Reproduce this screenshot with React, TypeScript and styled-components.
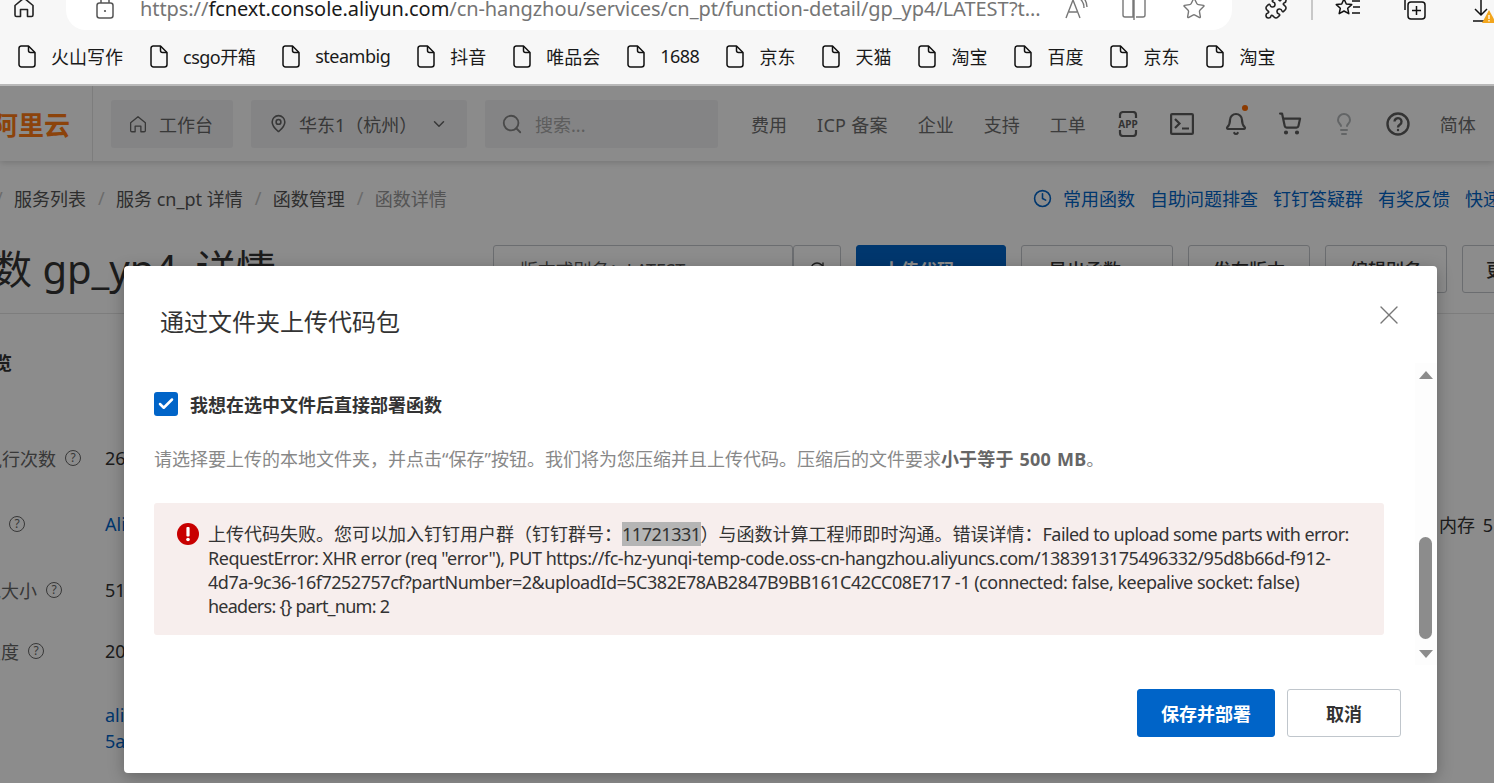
import React from "react";
import styled, { createGlobalStyle } from "styled-components";
import { Clock, MapPin, Search, ChevronDown, ShoppingCart, Lightbulb, Bell, Puzzle, Star, X, Check, RotateCw } from "lucide-react";

const Global = createGlobalStyle`
  html, body { margin: 0; padding: 0; background: #fff; }
  * { box-sizing: border-box; }
  body { font-family: "Noto Sans", "Noto Sans CJK SC", sans-serif; }
`;

const Screen = styled.div`
  position: relative;
  width: 1494px;
  height: 783px;
  overflow: hidden;
  display: flex;
  flex-direction: column;
  background: #fff;
`;

/* browser chrome */
const Chrome = styled.header`
  flex: none;
  height: 86px;
  background: #f7f7f7;
  border-bottom: 2px solid #b9b9b9;
  display: flex;
  flex-direction: column;
`;
const TopRow = styled.div`
  height: 30px;
  display: flex;
  align-items: flex-start;
  overflow: hidden;
`;
const ToolSlot = styled.div<{ $w: number; $ml?: number }>`
  flex: none;
  width: ${(p) => p.$w}px;
  margin-left: ${(p) => p.$ml ?? 0}px;
  display: flex;
  justify-content: center;
  margin-top: -4px;
  color: #222;
`;
const AddressBar = styled.div`
  flex: none;
  width: 1166px;
  height: 30px;
  margin-left: 31px;
  background: #fff;
  border-radius: 0 0 20px 20px;
  display: flex;
  align-items: flex-start;
`;
const Url = styled.div`
  flex: none;
  width: 900px;
  margin-left: 26px;
  margin-top: -6px;
  font-size: 20px;
  line-height: 30px;
  letter-spacing: -0.07px;
  white-space: nowrap;
  color: #757575;
  b { font-weight: 400; color: #1a1a1a; }
`;
const ToolDivider = styled.div`
  flex: none;
  width: 2px;
  height: 20px;
  margin-left: 23px;
  background: #c8c8c8;
`;
const Bookmarks = styled.nav`
  height: 54px;
  display: flex;
  align-items: center;
  padding: 0 0 2px 18px;
  gap: 27px;
`;
const Bookmark = styled.a<{ $latin?: boolean }>`
  flex: none;
  display: flex;
  align-items: center;
  gap: 15px;
  font-size: 18px;
  color: #1a1a1a;
  white-space: nowrap;
  letter-spacing: ${(p) => (p.$latin ? "-0.5px" : "0")};
`;

/* console page */
const Page = styled.main`
  flex: 1;
  min-height: 0;
  overflow: hidden;
  background: #fff;
  color: #555;
`;
const TopNav = styled.div`
  height: 75px;
  display: flex;
  align-items: center;
  background: #fdfdfd;
  box-shadow: 0 2px 6px rgba(0, 0, 0, 0.15);
`;
const Logo = styled.div`
  flex: none;
  width: 93px;
  height: 75px;
  border-right: 1px solid #e4e4e4;
  display: flex;
  align-items: center;
  font-size: 26px;
  font-weight: 700;
  color: #ff7a14;
  white-space: nowrap;
  span { margin-left: -8px; }
`;
const NavPill = styled.div<{ $w: number; $faint?: boolean; $pad?: number; $gap?: number }>`
  flex: none;
  width: ${(p) => p.$w}px;
  height: 48px;
  margin-left: 18px;
  padding-left: ${(p) => p.$pad ?? 18}px;
  background: #f1f1f3;
  border-radius: 3px;
  display: flex;
  align-items: center;
  gap: ${(p) => p.$gap ?? 10}px;
  font-size: 18px;
  color: ${(p) => (p.$faint ? "#aaa" : "#666")};
  white-space: nowrap;
`;
const NavRight = styled.div`
  flex: none;
  margin-left: 33px;
  display: flex;
  align-items: center;
  gap: 30px;
  font-size: 18px;
  color: #6e6e6e;
  white-space: nowrap;
`;
const WideNavText = styled.span`
  letter-spacing: 0.3px;
`;
const NavIcon = styled.div<{ $faint?: boolean }>`
  position: relative;
  flex: none;
  width: 24px;
  height: 24px;
  display: flex;
  align-items: center;
  justify-content: center;
  color: ${(p) => (p.$faint ? "#b4b8bb" : "#5e5e5e")};
`;
const Dot = styled.i`
  position: absolute;
  top: -7px;
  right: 0;
  width: 6px;
  height: 6px;
  border-radius: 50%;
  background: #ff6a00;
`;
const Crumbs = styled.div`
  height: 76px;
  padding-bottom: 2px;
  display: flex;
  align-items: center;
  font-size: 18px;
  white-space: nowrap;
`;
const CrumbLeft = styled.div`
  flex: 0 0 1037px;
  display: flex;
  align-items: center;
  gap: 12px;
  color: #555;
  margin-left: -4px;
  em { font-style: normal; color: #c4c4c4; width: 6px; }
`;
const CrumbCurrent = styled.span`
  color: #999;
`;
const Links = styled.div`
  flex: none;
  display: flex;
  align-items: center;
  gap: 15px;
  color: #0064c8;
  svg { margin-right: -4px; }
`;
const TitleRow = styled.div`
  height: 77px;
  display: flex;
  align-items: flex-start;
  padding-top: 8px;
  border-bottom: 1px solid #e3e3e3;
  white-space: nowrap;
`;
const PageTitle = styled.h1`
  flex: 0 0 541px;
  margin: 0 0 0 -48px;
  font-size: 40px;
  line-height: 48px;
  font-weight: 400;
  color: #333;
`;
const TitleTail = styled.span`
  margin-left: 8px;
`;
const ActionBtn = styled.div<{ $w: number; $ml?: number; $primary?: boolean }>`
  flex: none;
  width: ${(p) => p.$w}px;
  height: 48px;
  margin-left: ${(p) => p.$ml ?? 15}px;
  border: 1px solid ${(p) => (p.$primary ? "#0064c8" : "#c4c6cc")};
  border-radius: 3px;
  background: ${(p) => (p.$primary ? "#0064c8" : "#fff")};
  color: ${(p) => (p.$primary ? "#fff" : "#333")};
  font-size: 18px;
  font-weight: ${(p) => (p.$primary ? 700 : 500)};
  display: flex;
  align-items: center;
  justify-content: center;
  gap: 8px;
`;
const SelectBtn = styled(ActionBtn)`
  justify-content: space-between;
  padding: 0 14px 0 26px;
  font-weight: 400;
  color: #555;
  letter-spacing: -0.2px;
`;
const TabBand = styled.div`
  height: 81px;
  padding-top: 14px;
  display: flex;
  align-items: center;
  font-size: 18px;
  font-weight: 700;
  color: #333;
  margin-left: -24px;
`;
const Details = styled.div`
  padding-top: 29px;
`;
const Row = styled.div<{ $h: number }>`
  height: ${(p) => p.$h}px;
  display: flex;
  align-items: center;
  font-size: 18px;
  white-space: nowrap;
`;
const LabelCell = styled.div`
  flex: 0 0 105px;
  display: flex;
  align-items: center;
  color: #666;
`;
const LabelText = styled.div<{ $end: number }>`
  width: ${(p) => p.$end}px;
  display: flex;
  justify-content: flex-end;
`;
const Hint = styled.span`
  flex: none;
  width: 16px;
  height: 16px;
  margin-left: 9px;
  border: 1.5px solid #666;
  border-radius: 50%;
  font-size: 12px;
  line-height: 13px;
  text-align: center;
  color: #666;
`;
const Value = styled.div<{ $link?: boolean; $w?: number }>`
  flex: ${(p) => (p.$w ? `0 0 ${p.$w}px` : "none")};
  color: ${(p) => (p.$link ? "#0064c8" : "#333")};
  word-spacing: 3px;
`;
const LinkStack = styled.div`
  margin: 22px 0 0 105px;
  font-size: 18px;
  line-height: 26px;
  color: #0064c8;
`;

/* dialog */
const Overlay = styled.div`
  position: absolute;
  left: 0;
  right: 0;
  top: 86px;
  bottom: 0;
  background: rgba(0, 0, 0, 0.45);
`;
const Dialog = styled.section`
  position: absolute;
  left: 124px;
  top: 266px;
  width: 1313px;
  height: 507px;
  background: #fff;
  border-radius: 4px;
  box-shadow: 0 4px 16px rgba(0, 0, 0, 0.28);
  display: flex;
  flex-direction: column;
`;
const DialogHead = styled.div`
  flex: none;
  height: 97px;
  padding: 40px 40px 0 36px;
  display: flex;
  justify-content: space-between;
  align-items: flex-start;
`;
const DialogTitle = styled.h2`
  margin: 0;
  font-size: 24px;
  line-height: 32px;
  font-weight: 400;
  color: #333;
`;
const CloseBtn = styled.div`
  width: 16px;
  height: 16px;
  margin-top: 1px;
  color: #777;
  display: flex;
  align-items: center;
  justify-content: center;
`;
const DialogMiddle = styled.div`
  flex: none;
  height: 302px;
  display: flex;
`;
const Content = styled.div`
  flex: 1;
  padding: 29px 31px 0 30px;
`;
const CheckRow = styled.label`
  display: flex;
  align-items: center;
  gap: 12px;
  height: 24px;
  font-size: 18px;
  font-weight: 700;
  color: #333;
`;
const CheckBox = styled.span`
  flex: none;
  width: 24px;
  height: 24px;
  border-radius: 3px;
  background: #0064c8;
  color: #fff;
  display: flex;
  align-items: center;
  justify-content: center;
`;
const HintText = styled.p`
  margin: 31px 0 0;
  font-size: 18px;
  line-height: 24px;
  color: #888;
  white-space: nowrap;
  b { color: #666; font-weight: 700; letter-spacing: 0.2px; word-spacing: 1px; }
`;
const ErrorBox = styled.div`
  margin-top: 32px;
  height: 132px;
  padding: 19px 0 0 23px;
  background: #f7eeed;
  border-radius: 3px;
  display: flex;
  gap: 9px;
`;
const ErrorDot = styled.span`
  flex: none;
  width: 22px;
  height: 22px;
  margin-top: 1px;
  color: #c80000;
  display: flex;
`;
const ErrorText = styled.div`
  font-size: 18px;
  line-height: 24px;
  color: #333;
  white-space: nowrap;
  mark { background: #b5b5b5; color: #333; letter-spacing: -0.47px; }
`;
const Latin = styled.span<{ $ls: number }>`
  letter-spacing: ${(p) => p.$ls}px;
`;
const Track = styled.div`
  flex: none;
  width: 22px;
  background: #fdfdfd;
  display: flex;
  flex-direction: column;
  align-items: center;
  padding-right: 1px;
`;
const ArrowUp = styled.i`
  margin-top: 8px;
  border: 7px solid transparent;
  border-top: 0;
  border-bottom: 8px solid #8c8c8c;
`;
const Thumb = styled.i`
  margin-top: 158px;
  width: 13px;
  height: 102px;
  border-radius: 7px;
  background: #8c8c8c;
`;
const ArrowDown = styled.i`
  margin-top: 11px;
  border: 7px solid transparent;
  border-bottom: 0;
  border-top: 8px solid #8c8c8c;
`;
const Footer = styled.div`
  flex: none;
  padding: 24px 36px 0 0;
  display: flex;
  justify-content: flex-end;
  gap: 12px;
`;
const FootBtn = styled.button<{ $primary?: boolean; $w: number }>`
  width: ${(p) => p.$w}px;
  height: 48px;
  padding: 0;
  border: 1px solid ${(p) => (p.$primary ? "#0064c8" : "#c0c6cc")};
  border-radius: 3px;
  background: ${(p) => (p.$primary ? "#0064c8" : "#fff")};
  color: ${(p) => (p.$primary ? "#fff" : "#333")};
  font: 700 18px "Noto Sans", "Noto Sans CJK SC", sans-serif;
`;

const FileIcon = () => (
  <svg width="18" height="23" viewBox="0 0 18 23" fill="none" stroke="#111" strokeWidth="1.5" strokeLinejoin="round">
    <path d="M3 1h7.5L17 7.5V19.5a2.5 2.5 0 0 1-2.5 2.5h-11A2.5 2.5 0 0 1 1 19.5v-16A2.5 2.5 0 0 1 3 1Z" />
    <path d="M10.5 1v4.5a2 2 0 0 0 2 2H17" />
  </svg>
);
const HomeIcon = ({ size = 22 }: { size?: number }) => (
  <svg width={size} height={size} viewBox="0 0 22 22" fill="none" stroke="currentColor" strokeWidth="1.6" strokeLinejoin="round">
    <path d="M2 9.5 11 2l9 7.5V19a1.5 1.5 0 0 1-1.5 1.5H14.5V13.5h-7v7H3.5A1.5 1.5 0 0 1 2 19Z" />
  </svg>
);
const LockIcon = () => (
  <svg width="18" height="24" viewBox="0 0 18 24" fill="none" stroke="#555" strokeWidth="1.5">
    <rect x="1" y="7" width="16" height="15" rx="2.5" />
    <path d="M5 7V4a4 4 0 0 1 8 0v3" />
    <circle cx="9" cy="15" r="1.1" fill="#555" stroke="none" />
  </svg>
);
const ReadIcon = () => (
  <svg width="24" height="24" viewBox="0 0 24 24" fill="none" stroke="#777" strokeWidth="1.4">
    <path d="M2 22 9 4l7 18M5 16h8" />
    <path d="M15 2c3 2 5 5 5 10M18 0c3 3 5 6 5 11" />
  </svg>
);
const SplitIcon = () => (
  <svg width="24" height="24" viewBox="0 0 24 24" fill="none" stroke="#777" strokeWidth="1.4">
    <path d="M11 2H3a2 2 0 0 0-2 2v15a2 2 0 0 0 2 2h8ZM14 2h7a2 2 0 0 1 2 2v15a2 2 0 0 1-2 2h-7M12 0v24" />
  </svg>
);
const FavIcon = () => (
  <svg width="26" height="24" viewBox="0 0 26 24" fill="none" stroke="#111" strokeWidth="1.5" strokeLinejoin="round">
    <path d="M9 3l2.3 5 5.4.6-4 3.7 1.1 5.4L9 15l-4.800 2.700 1.100-5.400-4-3.700 5.400-.6Z" />
    <path d="M17 5h8M18 11h7M17 17h8" />
  </svg>
);
const CollectIcon = () => (
  <svg width="24" height="24" viewBox="0 0 24 24" fill="none" stroke="#111" strokeWidth="1.5">
    <rect x="6" y="6" width="17" height="17" rx="3" />
    <path d="M14.500 10v9M10 14.500h9M3 14V5a4 4 0 0 1 4-4h8" />
  </svg>
);
const DownloadIcon = () => (
  <svg width="24" height="30" viewBox="0 0 24 30" fill="none">
    <path d="M10 4v15M4 13l6 6 6-6M2 25h12" stroke="#111" strokeWidth="1.5" />
    <path d="M18 14l7 13H11Z" fill="#f2a51c" />
    <path d="M18 19v4M18 24v1.500" stroke="#fff" strokeWidth="1.300" />
  </svg>
);
const AppIcon = () => (
  <svg width="24" height="26" viewBox="0 0 24 26" fill="none" stroke="currentColor" strokeWidth="2.200" style={{ flex: "none" }}>
    <path d="M4 7V4a3 3 0 0 1 3-3h10a3 3 0 0 1 3 3v3M4 19v3a3 3 0 0 0 3 3h10a3 3 0 0 0 3-3v-3" />
    <text x="12" y="17" textAnchor="middle" fontSize="10" fontWeight="700" fill="currentColor" stroke="none" fontFamily="Noto Sans, sans-serif">APP</text>
  </svg>
);
const TerminalIcon = () => (
  <svg width="24" height="22" viewBox="0 0 24 22" fill="none" stroke="currentColor" strokeWidth="2.200">
    <rect x="1.100" y="1.100" width="21.800" height="19.800" rx="1" />
    <path d="M5 6l4.500 4.500L5 15M12 15.500h7" />
  </svg>
);
const HelpIcon = () => (
  <svg width="24" height="24" viewBox="0 0 24 24" fill="none" stroke="currentColor" strokeWidth="2.400">
    <circle cx="12" cy="12" r="10.500" />
    <path d="M8.500 9.500a3.500 3.500 0 1 1 5.500 3c-1.300.9-2 1.500-2 3" />
    <circle cx="12" cy="18" r="1.200" fill="currentColor" stroke="none" />
  </svg>
);
const ErrorIcon = () => (
  <svg width="22" height="22" viewBox="0 0 22 22">
    <circle cx="11" cy="11" r="11" fill="currentColor" />
    <rect x="9.400" y="4" width="3.200" height="9.500" rx="1" fill="#fff" />
    <circle cx="11" cy="16.500" r="1.800" fill="#fff" />
  </svg>
);

const bookmarks = ["火山写作", "csgo开箱", "steambig", "抖音", "唯品会", "1688", "京东", "天猫", "淘宝", "百度", "京东", "淘宝"];

export default function App() {
  return (
    <Screen>
      <Global />
      <Chrome>
        <TopRow>
          <ToolSlot $w={22} $ml={13}><HomeIcon /></ToolSlot>
          <AddressBar>
            <ToolSlot $w={18} $ml={30}><LockIcon /></ToolSlot>
            <Url>https://<b>fcnext.console.aliyun.com</b>/cn-hangzhou/services/cn_pt/function-detail/gp_yp4/LATEST?t...</Url>
            <ToolSlot $w={24} $ml={24}><ReadIcon /></ToolSlot>
            <ToolSlot $w={24} $ml={34}><SplitIcon /></ToolSlot>
            <ToolSlot $w={24} $ml={36}><Star size={25} strokeWidth={1.4} color="#777" /></ToolSlot>
          </AddressBar>
          <ToolSlot $w={24} $ml={32}><Puzzle size={24} strokeWidth={1.6} /></ToolSlot>
          <ToolDivider />
          <ToolSlot $w={26} $ml={22}><FavIcon /></ToolSlot>
          <ToolSlot $w={24} $ml={41}><CollectIcon /></ToolSlot>
          <ToolSlot $w={24} $ml={45}><DownloadIcon /></ToolSlot>
        </TopRow>
        <Bookmarks>
          {bookmarks.map((b, i) => (
            <Bookmark key={i} $latin={/[a-z0-9]/.test(b)}><FileIcon />{b}</Bookmark>
          ))}
        </Bookmarks>
      </Chrome>

      <Page>
        <TopNav>
          <Logo><span>阿里云</span></Logo>
          <NavPill $w={122} $gap={12}><HomeIcon size={18} />工作台</NavPill>
          <NavPill $w={216} $gap={11}><MapPin size={19} />华东1（杭州）<ChevronDown size={18} style={{ marginLeft: 2 }} /></NavPill>
          <NavPill $w={233} $faint $pad={16} $gap={12}><Search size={22} color="#888" />搜索...</NavPill>
          <NavRight>
            <span>费用</span><WideNavText>ICP 备案</WideNavText><span>企业</span><span>支持</span><span>工单</span>
            <NavIcon><AppIcon /></NavIcon>
            <NavIcon><TerminalIcon /></NavIcon>
            <NavIcon><Bell size={24} strokeWidth={2.2} /><Dot /></NavIcon>
            <NavIcon><ShoppingCart size={25} strokeWidth={2.2} /></NavIcon>
            <NavIcon $faint><Lightbulb size={24} strokeWidth={2} /></NavIcon>
            <NavIcon><HelpIcon /></NavIcon>
            <span>简体</span>
          </NavRight>
        </TopNav>
        <Crumbs>
          <CrumbLeft>
            <em>/</em><span>服务列表</span><em>/</em><span>服务 cn_pt 详情</span><em>/</em><span>函数管理</span><em>/</em><CrumbCurrent>函数详情</CrumbCurrent>
          </CrumbLeft>
          <Links>
            <Clock size={19} strokeWidth={2} />
            <span>常用函数</span><span>自助问题排查</span><span>钉钉答疑群</span><span>有奖反馈</span><span>快速</span>
          </Links>
        </Crumbs>
        <TitleRow>
          <PageTitle>函数 gp_yp4 <TitleTail>详情</TitleTail></PageTitle>
          <SelectBtn $w={300} $ml={0}>版本或别名：LATEST<ChevronDown size={16} /></SelectBtn>
          <ActionBtn $w={48} $ml={0}><RotateCw size={16} /></ActionBtn>
          <ActionBtn $w={150} $primary>上传代码 <ChevronDown size={16} /></ActionBtn>
          <ActionBtn $w={152}>导出函数 <ChevronDown size={16} /></ActionBtn>
          <ActionBtn $w={122}>发布版本</ActionBtn>
          <ActionBtn $w={122}>编辑别名</ActionBtn>
          <ActionBtn $w={84}>更多</ActionBtn>
        </TitleRow>
        <TabBand>概览</TabBand>
        <Details>
          <Row $h={67}>
            <LabelCell><LabelText $end={56}>累计执行次数</LabelText><Hint>?</Hint></LabelCell>
            <Value>26</Value>
          </Row>
          <Row $h={66}>
            <LabelCell><LabelText $end={0}>运行环境</LabelText><Hint>?</Hint></LabelCell>
            <Value $link $w={1334}>AliyunFC</Value>
            <Value>内存 512 MB</Value>
          </Row>
          <Row $h={65}>
            <LabelCell><LabelText $end={37}>代码包大小</LabelText><Hint>?</Hint></LabelCell>
            <Value>51</Value>
          </Row>
          <Row $h={58}>
            <LabelCell><LabelText $end={19}>实例并发度</LabelText><Hint>?</Hint></LabelCell>
            <Value>20</Value>
          </Row>
          <LinkStack>ali<br />5a</LinkStack>
        </Details>
      </Page>

      <Overlay />

      <Dialog>
        <DialogHead>
          <DialogTitle>通过文件夹上传代码包</DialogTitle>
          <CloseBtn><X size={32} strokeWidth={1.05} style={{ flex: "none" }} /></CloseBtn>
        </DialogHead>
        <DialogMiddle>
          <Content>
            <CheckRow>
              <CheckBox><Check size={18} strokeWidth={3.4} /></CheckBox>
              我想在选中文件后直接部署函数
            </CheckRow>
            <HintText>请选择要上传的本地文件夹，并点击“保存”按钮。我们将为您压缩并且上传代码。压缩后的文件要求<b>小于等于 500 MB</b>。</HintText>
            <ErrorBox>
              <ErrorDot><ErrorIcon /></ErrorDot>
              <ErrorText>
                上传代码失败。您可以加入钉钉用户群（钉钉群号：<mark>11721331</mark>）与函数计算工程师即时沟通。错误详情：<Latin $ls={-0.58}>Failed to upload some parts with error:</Latin><br />
                <Latin $ls={-0.47}>RequestError: XHR error (req "error"), PUT https://fc-hz-yunqi-temp-code.oss-cn-hangzhou.aliyuncs.com/1383913175496332/95d8b66d-f912-</Latin><br />
                <Latin $ls={-0.48}>4d7a-9c36-16f7252757cf?partNumber=2&amp;uploadId=5C382E78AB2847B9BB161C42CC08E717 -1 (connected: false, keepalive socket: false)</Latin><br />
                <Latin $ls={-0.75}>headers: {"{}"} part_num: 2</Latin>
              </ErrorText>
            </ErrorBox>
          </Content>
          <Track>
            <ArrowUp />
            <Thumb />
            <ArrowDown />
          </Track>
        </DialogMiddle>
        <Footer>
          <FootBtn $primary $w={138}>保存并部署</FootBtn>
          <FootBtn $w={114}>取消</FootBtn>
        </Footer>
      </Dialog>
    </Screen>
  );
}
